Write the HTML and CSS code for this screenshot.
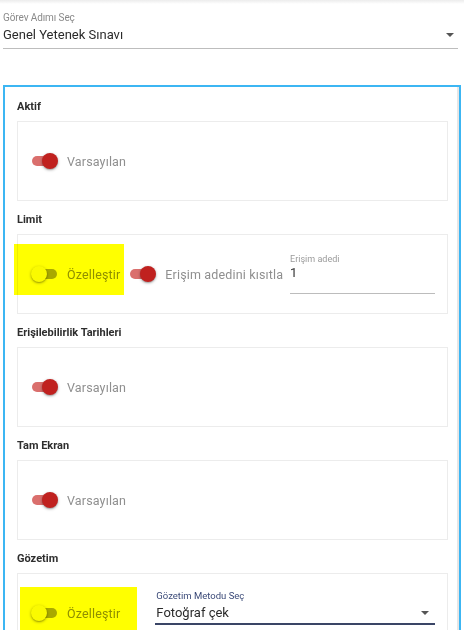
FILE: index.html
```html
<!DOCTYPE html>
<html lang="tr">
<head>
<meta charset="utf-8">
<link rel="stylesheet" href="styles.css">
</head>
<body>
<div class="topshade"></div>
<div class="step-select">
  <div class="field-label">Görev Adımı Seç</div>
  <div class="field-value"><span>Genel Yetenek Sınavı</span><span class="caret"></span></div>
</div>

<div class="frame">
  <section class="section">
    <div class="section-title">Aktif</div>
    <div class="panel">
      <div class="toggle on"><span class="track"></span><span class="thumb"></span></div>
      <span class="toggle-text">Varsayılan</span>
    </div>
  </section>

  <section class="section">
    <div class="section-title">Limit</div>
    <div class="panel">
      <div class="hl-wrap">
        <div class="toggle off"><span class="track"></span><span class="thumb"></span></div>
        <span class="toggle-text">Özelleştir</span>
        <div class="highlight hl-limit"></div>
      </div>
      <div class="toggle on gap-l"><span class="track"></span><span class="thumb"></span></div>
      <span class="toggle-text">Erişim adedini kısıtla</span>
      <div class="input-field">
        <div class="input-label">Erişim adedi</div>
        <div class="input-value">1</div>
      </div>
    </div>
  </section>

  <section class="section">
    <div class="section-title">Erişilebilirlik Tarihleri</div>
    <div class="panel">
      <div class="toggle on"><span class="track"></span><span class="thumb"></span></div>
      <span class="toggle-text">Varsayılan</span>
    </div>
  </section>

  <section class="section">
    <div class="section-title">Tam Ekran</div>
    <div class="panel">
      <div class="toggle on"><span class="track"></span><span class="thumb"></span></div>
      <span class="toggle-text">Varsayılan</span>
    </div>
  </section>

  <section class="section">
    <div class="section-title">Gözetim</div>
    <div class="panel">
      <div class="hl-wrap">
        <div class="toggle off"><span class="track"></span><span class="thumb"></span></div>
        <span class="toggle-text">Özelleştir</span>
        <div class="highlight hl-gozetim"></div>
      </div>
      <div class="method-select">
        <div class="method-label">Gözetim Metodu Seç</div>
        <div class="method-value"><span>Fotoğraf çek</span><span class="caret"></span></div>
      </div>
    </div>
  </section>
</div>
</body>
</html>
```

FILE: styles.css
```css
html, body {
  margin: 0;
  padding: 0;
  background: #fff;
  font-family: Roboto, "Noto Sans", Arial, sans-serif;
  overflow: hidden;
}

.topshade {
  height: 4px;
  background: linear-gradient(#ececec, #fff);
}

.step-select {
  margin: 8px 6px 0 3px;
}

.field-label {
  font-size: 10px;
  line-height: 12px;
  color: #8a8a8a;
  letter-spacing: -0.1px;
}

.field-value {
  display: flex;
  align-items: center;
  justify-content: space-between;
  font-size: 13px;
  line-height: 16px;
  color: #2b2b2b;
  padding: 3px 4px 5px 0;
  border-bottom: 1px solid #bdbdbd;
}

.caret {
  width: 0;
  height: 0;
  border-left: 4.5px solid transparent;
  border-right: 4.5px solid transparent;
  border-top: 4.5px solid #555;
}

.frame {
  margin: 36px 3px 0 3px;
  border: 2px solid #3cb6f3;
  box-shadow: inset -2px 0 0 #e6e6e6;
  padding: 13px 11px 0 12px;
}

.section-title {
  font-size: 11px;
  line-height: 13px;
  font-weight: 700;
  color: #2e2e2e;
  margin-bottom: 8px;
}

.panel {
  height: 78px;
  border: 1px solid #ececec;
  margin-bottom: 12px;
  display: flex;
  align-items: center;
  padding: 0 0 0 13px;
  position: relative;
}

.toggle {
  position: relative;
  width: 27px;
  height: 16px;
  flex: none;
}

.track {
  position: absolute;
  left: 1px;
  top: 3px;
  width: 25px;
  height: 10px;
  border-radius: 5px;
}

.thumb {
  position: absolute;
  top: 0;
  width: 16px;
  height: 16px;
  border-radius: 50%;
  box-shadow: 0 1px 3px rgba(0,0,0,0.35), 0 1px 1px rgba(0,0,0,0.12);
}

.toggle.on .track { background: #da6f6d; }
.toggle.on .thumb { left: 11px; background: #c0211f; }
.toggle.off .track { background: #a9a9a9; }
.toggle.off .thumb { left: 0; background: #fafafa; }

.toggle-text {
  font-size: 12.5px;
  letter-spacing: 0.15px;
  color: #8f8f8f;
  margin-left: 9px;
  white-space: nowrap;
}

.hl-wrap {
  position: relative;
  display: flex;
  align-items: center;
}

.highlight {
  position: absolute;
  background: #ffff00;
  mix-blend-mode: multiply;
}

.hl-limit {
  left: -17px;
  top: -22px;
  width: 110px;
  height: 51px;
}

.hl-gozetim {
  left: -11px;
  top: -18px;
  width: 117px;
  height: 60px;
}

.gap-l { margin-left: 9px; }

.input-field {
  margin-left: 7px;
  width: 145px;
  padding-top: 0;
}

.input-label {
  font-size: 9px;
  line-height: 11px;
  color: #9a9a9a;
}

.input-value {
  font-size: 13px;
  line-height: 16px;
  color: #333;
  padding: 0 0 12px 0;
  border-bottom: 1px solid #bcbcbc;
}

.method-select {
  margin-left: 35px;
  width: 280px;
  margin-top: -12px;
}

.method-label {
  font-size: 9.5px;
  line-height: 11px;
  color: #3b4a78;
  padding-left: 1px;
  margin-bottom: 3px;
}

.method-value {
  display: flex;
  align-items: center;
  justify-content: space-between;
  font-size: 13px;
  line-height: 16px;
  color: #2b2b2b;
  padding: 1px 6px 2px 1px;
  border-bottom: 2px solid #3a4566;
}
```
